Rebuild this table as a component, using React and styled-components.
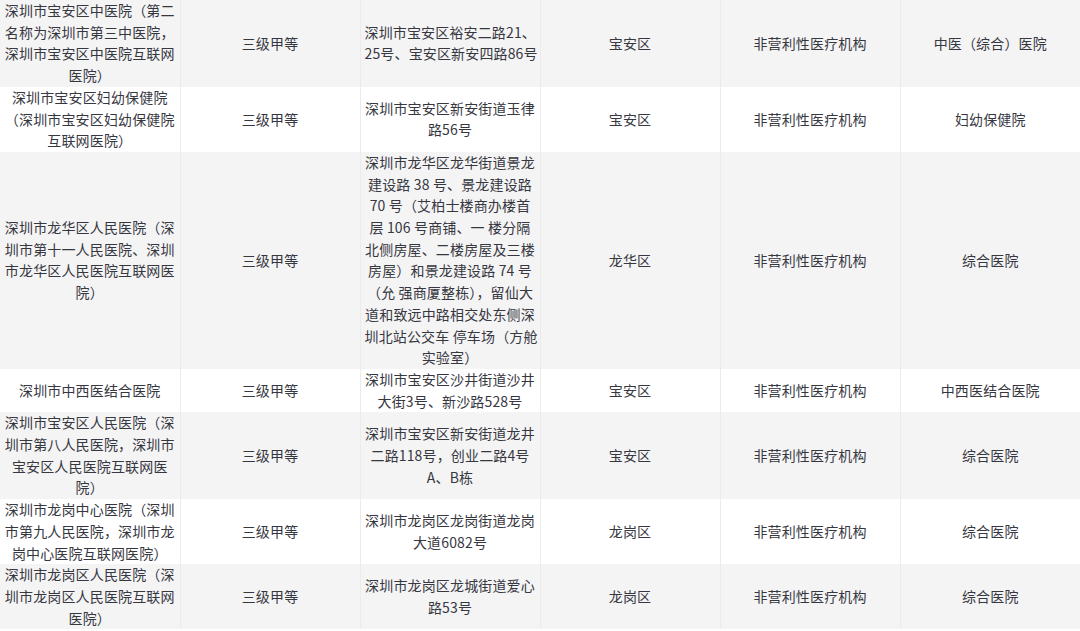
import styled, { createGlobalStyle } from 'styled-components';

const GlobalStyle = createGlobalStyle`
  html, body {
    margin: 0;
    padding: 0;
    background: #ffffff;
  }
`;

const Table = styled.table`
  width: 1080px;
  table-layout: fixed;
  border-collapse: collapse;
  font-family: "Noto Sans CJK SC", "Noto Sans", sans-serif;
  font-size: 14px;
  line-height: 21.7px;
  color: #37373f;
`;

const Col = styled.col`
  width: 180px;
`;

const Row = styled.tr`
  background: ${(p) => (p.$shaded ? '#f4f4f5' : '#ffffff')};
`;

const Cell = styled.td`
  padding: 0 4px;
  text-align: center;
  vertical-align: middle;
  white-space: nowrap;
  letter-spacing: 0.15px;
  border-right: 1px solid #ebebed;

  &:last-child {
    border-right: none;
  }
`;

const Line = styled.span`
  display: block;
`;

const rows = [
  {
    name: ['深圳市宝安区中医院（第二', '名称为深圳市第三中医院，', '深圳市宝安区中医院互联网', '医院）'],
    address: ['深圳市宝安区裕安二路21、', '25号、宝安区新安四路86号'],
    district: '宝安区',
    kind: '中医（综合）医院',
  },
  {
    name: ['深圳市宝安区妇幼保健院', '（深圳市宝安区妇幼保健院', '互联网医院）'],
    address: ['深圳市宝安区新安街道玉律', '路56号'],
    district: '宝安区',
    kind: '妇幼保健院',
  },
  {
    name: ['深圳市龙华区人民医院（深', '圳市第十一人民医院、深圳', '市龙华区人民医院互联网医', '院）'],
    address: [
      '深圳市龙华区龙华街道景龙',
      '建设路 38 号、景龙建设路',
      '70 号（艾柏士楼商办楼首',
      '层 106 号商铺、一 楼分隔',
      '北侧房屋、二楼房屋及三楼',
      '房屋）和景龙建设路 74 号',
      '（允 强商厦整栋），留仙大',
      '道和致远中路相交处东侧深',
      '圳北站公交车 停车场（方舱',
      '实验室）',
    ],
    district: '龙华区',
    kind: '综合医院',
  },
  {
    name: ['深圳市中西医结合医院'],
    address: ['深圳市宝安区沙井街道沙井', '大街3号、新沙路528号'],
    district: '宝安区',
    kind: '中西医结合医院',
  },
  {
    name: ['深圳市宝安区人民医院（深', '圳市第八人民医院，深圳市', '宝安区人民医院互联网医', '院）'],
    address: ['深圳市宝安区新安街道龙井', '二路118号，创业二路4号', 'A、B栋'],
    district: '宝安区',
    kind: '综合医院',
  },
  {
    name: ['深圳市龙岗中心医院（深圳', '市第九人民医院，深圳市龙', '岗中心医院互联网医院）'],
    address: ['深圳市龙岗区龙岗街道龙岗', '大道6082号'],
    district: '龙岗区',
    kind: '综合医院',
  },
  {
    name: ['深圳市龙岗区人民医院（深', '圳市龙岗区人民医院互联网', '医院）'],
    address: ['深圳市龙岗区龙城街道爱心', '路53号'],
    district: '龙岗区',
    kind: '综合医院',
  },
];

function Lines({ lines }) {
  return lines.map((line, i) => <Line key={i}>{line}</Line>);
}

function App() {
  return (
    <>
      <GlobalStyle />
      <Table>
        <colgroup>
          <Col />
          <Col />
          <Col />
          <Col />
          <Col />
          <Col />
        </colgroup>
        <tbody>
          {rows.map((r, i) => (
            <Row key={i} $shaded={i % 2 === 0}>
              <Cell><Lines lines={r.name} /></Cell>
              <Cell>三级甲等</Cell>
              <Cell><Lines lines={r.address} /></Cell>
              <Cell>{r.district}</Cell>
              <Cell>非营利性医疗机构</Cell>
              <Cell>{r.kind}</Cell>
            </Row>
          ))}
        </tbody>
      </Table>
    </>
  );
}

export default App;
